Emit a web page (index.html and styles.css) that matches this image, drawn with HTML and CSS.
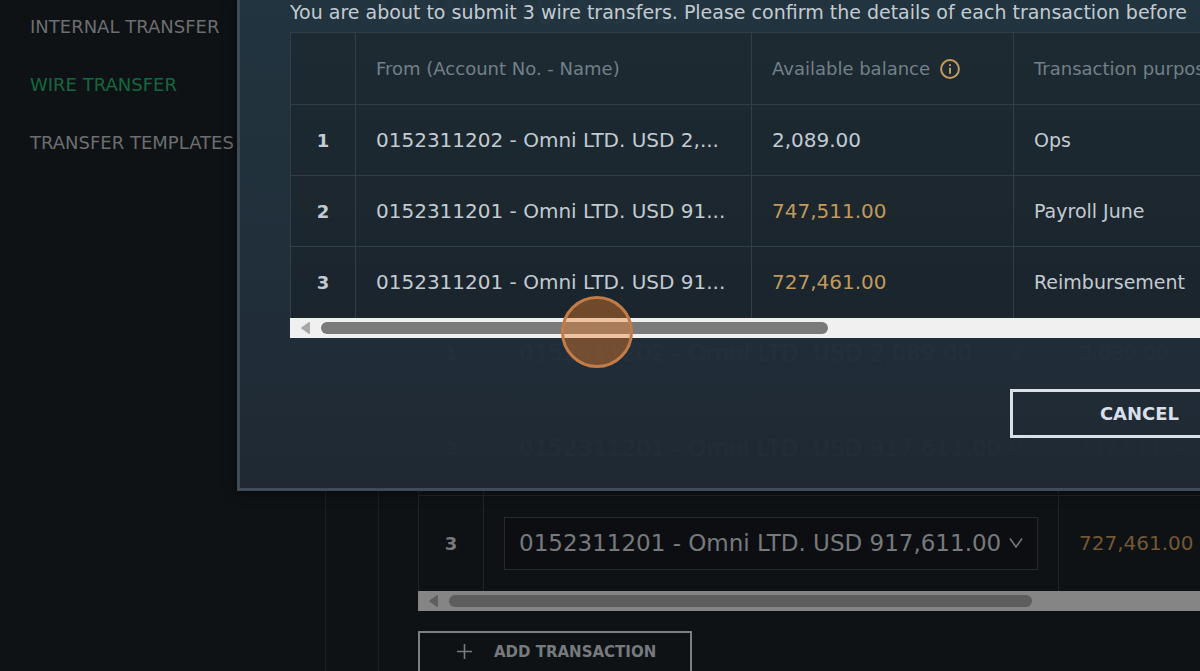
FILE: index.html
```html
<!DOCTYPE html>
<html lang="en">
<head>
<meta charset="utf-8">
<title>Wire transfer</title>
<link rel="stylesheet" href="styles.css">
</head>
<body>
<div class="page">
  <nav class="sidebar">
    <a href="#internal">INTERNAL TRANSFER</a>
    <a href="#wire" class="active">WIRE TRANSFER</a>
    <a href="#templates">TRANSFER TEMPLATES</a>
  </nav>
  <main class="content">
    <h1>WIRE TRANSFER</h1>
    <div class="breadcrumb">Transfers / Wire transfer</div>
    <div class="form-panel">
      <label class="question">Do you want to submit multiple transactions? <input type="checkbox" checked></label>
      <div class="table-box">
        <table class="transactions">
          <colgroup><col class="col-num"><col class="col-account"><col></colgroup>
          <thead>
            <tr><td></td><td></td><td></td></tr>
          </thead>
          <tbody>
            <tr>
              <th scope="row">1</th>
              <td><div class="select-wrap"><select aria-label="Account for transaction 1"><option>0152311202 - Omni LTD. USD 2,089.00</option></select><svg viewBox="0 0 14 12"><path d="M1 1.5 7 10l6-8.5"/></svg></div></td>
              <td>2,089.00</td>
            </tr>
            <tr>
              <th scope="row">2</th>
              <td><div class="select-wrap"><select aria-label="Account for transaction 2"><option>0152311201 - Omni LTD. USD 917,611.00</option></select><svg viewBox="0 0 14 12"><path d="M1 1.5 7 10l6-8.5"/></svg></div></td>
              <td class="gold">747,511.00</td>
            </tr>
            <tr>
              <th scope="row">3</th>
              <td><div class="select-wrap"><select aria-label="Account for transaction 3"><option>0152311201 - Omni LTD. USD 917,611.00</option></select><svg viewBox="0 0 14 12"><path d="M1 1.5 7 10l6-8.5"/></svg></div></td>
              <td class="gold">727,461.00</td>
            </tr>
          </tbody>
        </table>
        <div class="scrollbar"><svg viewBox="0 0 10 12"><path d="M8.5 1v10L1.5 6z"/></svg><div class="thumb"></div></div>
      </div>
      <button class="add" type="button"><svg viewBox="0 0 14 14"><path d="M7 0v14M0 7h14"/></svg>ADD TRANSACTION</button>
    </div>
  </main>
</div>

<section class="modal" role="dialog" aria-label="Confirm wire transfers">
  <p class="intro">You are about to submit 3 wire transfers. Please confirm the details of each transaction before</p>
  <div class="table-box">
    <table class="summary">
      <colgroup><col class="col-num"><col class="col-from"><col class="col-balance"><col></colgroup>
      <thead>
        <tr>
          <td></td>
          <th scope="col">From (Account No. - Name)</th>
          <th scope="col"><span class="with-icon">Available balance <svg viewBox="0 0 20 20"><circle cx="10" cy="10" r="8.9"/><path d="M10 8.7v6M10 5.3v1.8"/></svg></span></th>
          <th scope="col">Transaction purpose</th>
        </tr>
      </thead>
      <tbody>
        <tr><th scope="row">1</th><td class="figure">0152311202 - Omni LTD. USD 2,...</td><td class="figure">2,089.00</td><td>Ops</td></tr>
        <tr><th scope="row">2</th><td class="figure">0152311201 - Omni LTD. USD 91...</td><td class="figure gold">747,511.00</td><td>Payroll June</td></tr>
        <tr><th scope="row">3</th><td class="figure">0152311201 - Omni LTD. USD 91...</td><td class="figure gold">727,461.00</td><td>Reimbursement</td></tr>
      </tbody>
    </table>
    <div class="scrollbar"><svg viewBox="0 0 10 12"><path d="M8.5 1v10L1.5 6z"/></svg><div class="thumb"></div></div>
  </div>
  <div class="actions"><button class="cancel" type="button">CANCEL</button></div>
</section>
<div class="pointer"></div>
</body>
</html>
```
FILE: styles.css
```css
* { box-sizing: border-box; }
html, body { height: 100%; }
body {
  margin: 0;
  overflow: hidden;
  position: relative;
  background: #0e1214;
  color: #777a7d;
  font-family: "DejaVu Sans", Verdana, sans-serif;
  font-size: 18px;
}
button, select { font-family: inherit; color: inherit; border-radius: 0; }

.page { display: flex; min-height: 100%; }
.sidebar {
  flex: 0 0 326px;
  display: flex;
  flex-direction: column;
  gap: 34px;
  padding: 15px 30px;
  border-right: 1px solid #1a1f22;
}
.sidebar a {
  color: #6c6e70;
  font-size: 18px;
  line-height: 24px;
  text-decoration: none;
  white-space: nowrap;
}
.sidebar .active { color: #16663f; }

.content { flex: 1; min-width: 0; padding-left: 52px; display: flex; flex-direction: column; }
h1 { margin: 0; height: 72px; font-size: 40px; line-height: 20px; font-weight: normal; white-space: nowrap; }
.breadcrumb { height: 58px; line-height: 40px; white-space: nowrap; }
.form-panel {
  flex: 1;
  padding: 47px 0 0 39px;
  border-left: 1px solid #1a1f22;
}
.question { display: flex; align-items: center; gap: 20px; height: 40px; margin-bottom: 23px; }
.question input {
  appearance: none;
  width: 52px;
  height: 26px;
  margin: 0;
  border-radius: 13px;
  background: radial-gradient(circle at 39px 13px, #777a7d 12px, #16301f 13px);
}

.table-box { overflow: hidden; }
table { width: 100%; table-layout: fixed; border-collapse: collapse; white-space: nowrap; }
th, td { padding: 0 20px; text-align: left; font-weight: normal; }
th[scope="row"] { padding: 0; text-align: center; font-weight: bold; }
.col-num { width: 65px; }

.transactions td, .transactions th { height: 95px; border: 1px solid #1f2427; border-right: 0; }
.transactions thead td { height: 65px; }
.transactions td { font-size: 20px; }
.transactions .col-account { width: 575px; }
.transactions tr:last-child > * { border-bottom: 0; }
.transactions .gold { color: #735736; }
.select-wrap { position: relative; }
.select-wrap select {
  appearance: none;
  display: block;
  width: 100%;
  height: 53px;
  padding: 0 36px 0 14px;
  border: 1px solid #25292c;
  background: #0d0e12;
  font-size: 23px;
}
.select-wrap svg {
  position: absolute;
  top: 20px;
  right: 15px;
  width: 14px;
  height: 12px;
  fill: none;
  stroke: #777a7d;
  stroke-width: 1.5;
  pointer-events: none;
}

.scrollbar { display: flex; align-items: center; height: 20px; padding-left: 10px; gap: 10px; background: #858585; }
.scrollbar svg { flex: none; width: 11px; height: 14px; fill: #5f5f5f; stroke: #5f5f5f; stroke-width: 1; stroke-linejoin: round; }
.scrollbar .thumb { flex: none; width: 583px; height: 12px; border-radius: 6px; background: #5d5d5d; }

.add {
  display: flex;
  align-items: center;
  gap: 22px;
  height: 42px;
  margin-top: 20px;
  padding: 0 34px 0 37px;
  border: 2px solid #7c8083;
  background: transparent;
  font-size: 15px;
  font-weight: bold;
}
.add svg { width: 15px; height: 15px; stroke: currentColor; stroke-width: 1.5; }

.modal {
  position: absolute;
  top: 0;
  left: 237px;
  right: -120px;
  padding: 0 48px 50px 50px;
  border: solid #3f4c57;
  border-width: 0 3px 3px;
  background: linear-gradient(#223540f8, #212f3bf8 60%, #202933f8);
  box-shadow: 0 0 12px #0008;
  color: #c3cbd2;
}
.intro { margin: 0; height: 32px; font-size: 19px; line-height: 24px; white-space: nowrap; overflow: hidden; }
.summary { background: linear-gradient(#1d2a31f8, #1b242cf8); }
.summary td, .summary th { height: 72px; border: 1px solid #303e46; border-bottom: 0; }
.summary tbody > tr > * { height: 71px; }
.summary thead th { color: #728088; }
.summary tbody td { font-size: 19px; }
.summary tbody .figure { font-size: 20px; }
.col-from { width: 396px; }
.col-balance { width: 262px; }
.with-icon { display: flex; align-items: center; gap: 10px; }
.with-icon svg { width: 20px; height: 20px; fill: none; stroke: #c19b5c; stroke-width: 2; }
.summary .gold { color: #c09a5c; }
.modal .scrollbar { background: #f0f0f0; }
.modal .scrollbar svg { fill: #a7a7a7; stroke: #a7a7a7; }
.modal .thumb { width: 507px; background: #7a7a7a; }

.actions { display: flex; justify-content: flex-end; margin-top: 51px; }
.cancel {
  width: 259px;
  height: 49px;
  border: 3px solid #d9e1e7;
  background: transparent;
  font-size: 18px;
  font-weight: bold;
  color: #d9dfe8;
}

.pointer {
  position: absolute;
  top: 296px;
  left: 561px;
  width: 72px;
  height: 72px;
  border: 3px solid #c17c48;
  border-radius: 50%;
  background: #f0802866;
}
```
